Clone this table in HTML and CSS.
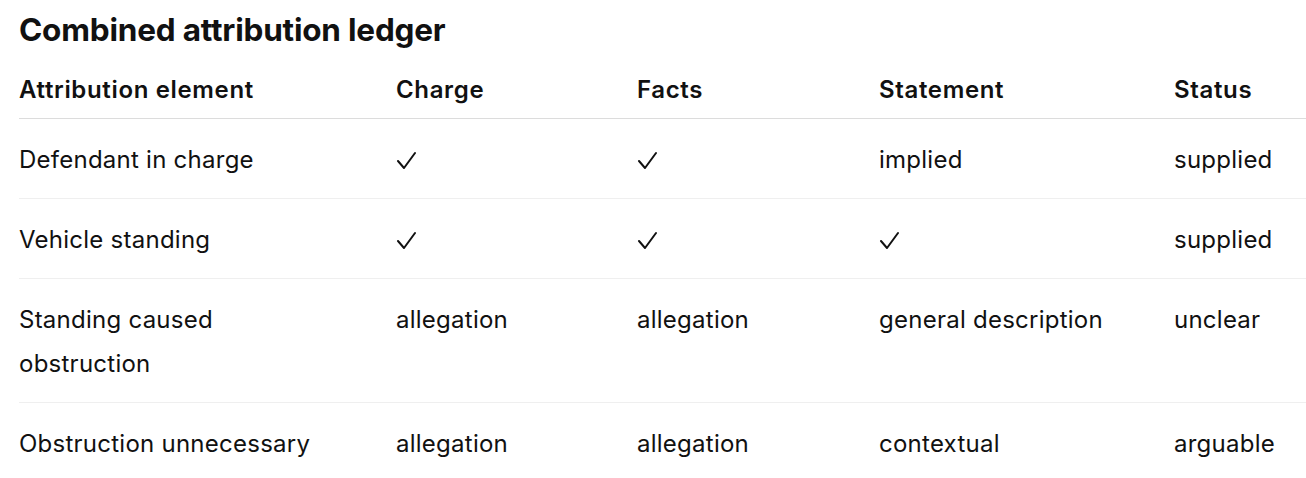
FILE: index.html
```html
<!DOCTYPE html>
<html lang="en">
<head>
<meta charset="utf-8">
<title>Combined attribution ledger</title>
<link rel="stylesheet" href="styles.css">
</head>
<body>
<section class="ledger">
  <h2 class="ledger-title">Combined attribution ledger</h2>
  <table class="ledger-table">
    <thead>
      <tr>
        <th class="c1">Attribution element</th>
        <th class="c2">Charge</th>
        <th class="c3">Facts</th>
        <th class="c4">Statement</th>
        <th class="c5">Status</th>
      </tr>
    </thead>
    <tbody>
      <tr>
        <td>Defendant in charge</td>
        <td><svg class="check" viewBox="0 0 20 20" role="img" aria-label="✓"><polyline points="2,11 8,18 19,3"/></svg></td>
        <td><svg class="check" viewBox="0 0 20 20" role="img" aria-label="✓"><polyline points="2,11 8,18 19,3"/></svg></td>
        <td>implied</td>
        <td>supplied</td>
      </tr>
      <tr>
        <td>Vehicle standing</td>
        <td><svg class="check" viewBox="0 0 20 20" role="img" aria-label="✓"><polyline points="2,11 8,18 19,3"/></svg></td>
        <td><svg class="check" viewBox="0 0 20 20" role="img" aria-label="✓"><polyline points="2,11 8,18 19,3"/></svg></td>
        <td><svg class="check" viewBox="0 0 20 20" role="img" aria-label="✓"><polyline points="2,11 8,18 19,3"/></svg></td>
        <td>supplied</td>
      </tr>
      <tr>
        <td>Standing caused<br>obstruction</td>
        <td>allegation</td>
        <td>allegation</td>
        <td>general description</td>
        <td>unclear</td>
      </tr>
      <tr>
        <td>Obstruction unnecessary</td>
        <td>allegation</td>
        <td>allegation</td>
        <td>contextual</td>
        <td>arguable</td>
      </tr>
    </tbody>
  </table>
</section>
</body>
</html>
```

FILE: styles.css
```css
html, body {
  margin: 0;
  padding: 0;
  background: #ffffff;
}
body {
  font-family: Inter, "Noto Sans", "Liberation Sans", sans-serif;
  color: #111111;
  overflow: hidden;
}
.ledger {
  padding: 10px 0 0 19px;
}
.ledger-title {
  margin: 0;
  font-size: 31.5px;
  font-weight: 700;
  line-height: 40px;
  letter-spacing: -0.2px;
}
.ledger-table {
  border-collapse: collapse;
  table-layout: fixed;
  width: 1287px;
  margin-top: 0;
  font-size: 24px;
  line-height: 44px;
  letter-spacing: 0.25px;
}
.ledger-table th {
  text-align: left;
  font-weight: 600;
  letter-spacing: 0.65px;
  padding: 18px 0 6px 0;
  border-bottom: 1px solid #dcdcdc;
}
.ledger-table td {
  padding: 19px 0 16px 0;
  vertical-align: top;
  border-bottom: 1px solid #efefef;
  font-weight: 400;
  white-space: nowrap;
}
.ledger-table tbody tr:last-child td {
  border-bottom: none;
}
.check {
  display: block;
  width: 20px;
  height: 20px;
  margin-top: 12px;
  fill: none;
  stroke: #111111;
  stroke-width: 2;
  stroke-linecap: round;
  stroke-linejoin: round;
}
.c1 { width: 377px; }
.c2 { width: 241px; }
.c3 { width: 242px; }
.c4 { width: 295px; }
.c5 { width: auto; }
```
